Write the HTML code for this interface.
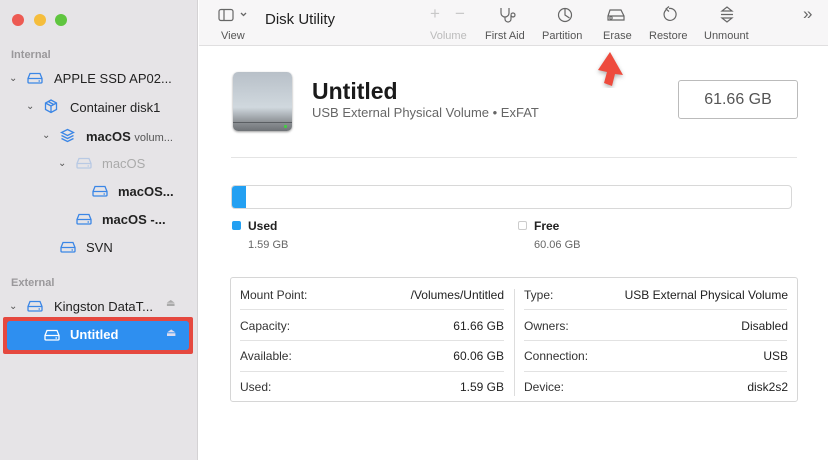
<!DOCTYPE html>
<html><head><style>
*{margin:0;padding:0;box-sizing:border-box}
body{width:828px;height:460px;overflow:hidden;font-family:"Liberation Sans",sans-serif;background:#fff;position:relative}
.a{position:absolute;white-space:nowrap}
#side{left:0;top:0;width:198px;height:460px;background:#e6e4e7;border-right:1px solid #d4d2d4}
.sec{font-size:11px;color:#9a989b;font-weight:bold}
.it{font-size:13px;color:#222}
.chev{font-size:10px;color:#555}
.tb{font-size:11px;color:#555}
.tl{font-size:12px;color:#333}
.tv{font-size:12px;color:#222;text-align:right}
.ln{height:1px;background:#e2e2e2}
</style></head><body>
<div class="a" id="side"></div>
<div class="a" style="left:12px;top:14px;width:12px;height:12px;border-radius:6px;background:#ed5a53"></div>
<div class="a" style="left:34px;top:14px;width:12px;height:12px;border-radius:6px;background:#f5bd3c"></div>
<div class="a" style="left:55px;top:14px;width:12px;height:12px;border-radius:6px;background:#5fc53f"></div>

<svg width="0" height="0" style="position:absolute"><defs>
<symbol id="d" viewBox="0 0 16 12"><path d="M3 1.5h10l2 5v3.5a1 1 0 0 1-1 1H2a1 1 0 0 1-1-1V6.5z M1 6.5h14 M11.5 9h1.5" fill="none" stroke="currentColor" stroke-width="1.3"/></symbol>
</defs></svg>

<div class="a sec" style="left:11px;top:49px">Internal</div>
<div class="a chev" style="left:9px;top:73px">⌄</div>
<svg class="a" style="left:27px;top:72px;color:#3b86e6" width="16" height="12"><use href="#d"/></svg>
<div class="a it" style="left:54px;top:71px">APPLE SSD AP02...</div>
<div class="a chev" style="left:26px;top:101px">⌄</div>
<svg class="a" style="left:44px;top:99px" width="14" height="15" viewBox="0 0 14 15"><path d="M7 1l5.5 3v6.5L7 13.5 1.5 10.5V4z M1.5 4L7 7l5.5-3 M7 7v6.5 M4.2 2.5l5.5 3" fill="none" stroke="#3b86e6" stroke-width="1.3"/></svg>
<div class="a it" style="left:70px;top:100px">Container disk1</div>
<div class="a chev" style="left:42px;top:130px">⌄</div>
<svg class="a" style="left:60px;top:128px" width="15" height="15" viewBox="0 0 15 15"><path d="M7.5 1.5l6 3-6 3-6-3z M1.5 7.5l6 3 6-3 M1.5 10.5l6 3 6-3" fill="none" stroke="#3b86e6" stroke-width="1.3"/></svg>
<div class="a it" style="left:86px;top:129px;font-weight:bold">macOS <span style="font-weight:normal;font-size:11px;color:#555">volum...</span></div>
<div class="a chev" style="left:58px;top:158px">⌄</div>
<svg class="a" style="left:76px;top:157px;color:#b8c9e4" width="16" height="12"><use href="#d"/></svg>
<div class="a it" style="left:102px;top:156px;color:#aaa">macOS</div>
<svg class="a" style="left:92px;top:185px;color:#3b86e6" width="16" height="12"><use href="#d"/></svg>
<div class="a it" style="left:118px;top:184px;font-weight:bold">macOS...</div>
<svg class="a" style="left:76px;top:213px;color:#3b86e6" width="16" height="12"><use href="#d"/></svg>
<div class="a it" style="left:102px;top:212px;font-weight:bold">macOS -...</div>
<svg class="a" style="left:60px;top:241px;color:#3b86e6" width="16" height="12"><use href="#d"/></svg>
<div class="a it" style="left:86px;top:240px">SVN</div>

<div class="a sec" style="left:11px;top:277px">External</div>
<div class="a chev" style="left:9px;top:301px">⌄</div>
<svg class="a" style="left:27px;top:300px;color:#3b86e6" width="16" height="12"><use href="#d"/></svg>
<div class="a it" style="left:54px;top:299px">Kingston DataT...</div>
<div class="a" style="left:166px;top:298px;font-size:10px;color:#aaa">⏏</div>

<div class="a" style="left:3px;top:317px;width:190px;height:37px;background:#e5483f;border-radius:2px"></div>
<div class="a" style="left:7px;top:321px;width:182px;height:29px;background:#2e8ff0;border-radius:3px"></div>
<svg class="a" style="left:44px;top:329px;color:#fff" width="16" height="12"><use href="#d"/></svg>
<div class="a it" style="left:70px;top:327px;color:#fff;font-weight:bold">Untitled</div>
<div class="a" style="left:166px;top:326px;font-size:11px;color:#dde">⏏</div>

<!-- toolbar -->
<div class="a" style="left:199px;top:0;width:629px;height:46px;background:#f7f6f7;border-bottom:1px solid #e0dfe0"></div>
<svg class="a" style="left:218px;top:8px" width="30" height="14" viewBox="0 0 30 14"><rect x="1" y="1.5" width="14" height="11" rx="2" fill="none" stroke="#666" stroke-width="1.2"/><path d="M6 2v10" stroke="#666" stroke-width="1.2"/><path d="M23 5l2.5 2.5L28 5" fill="none" stroke="#666" stroke-width="1.3"/></svg>
<div class="a tb" style="left:221px;top:30px">View</div>
<div class="a" style="left:265px;top:11px;font-size:15px;color:#222">Disk Utility</div>
<div class="a" style="left:430px;top:4px;font-size:17px;color:#c8c8c8">+</div>
<div class="a" style="left:455px;top:4px;font-size:17px;color:#c8c8c8">−</div>
<div class="a tb" style="left:430px;top:30px;color:#bbb">Volume</div>
<svg class="a" style="left:498px;top:6px" width="20" height="18" viewBox="0 0 20 18"><path d="M3 2v5a4 4 0 0 0 8 0V2 M7 11v2a3 3 0 0 0 6 0V9 M13 9a2 2 0 1 0 0-.1" fill="none" stroke="#666" stroke-width="1.2"/></svg>
<div class="a tb" style="left:485px;top:30px">First Aid</div>
<svg class="a" style="left:557px;top:7px" width="16" height="16" viewBox="0 0 16 16"><circle cx="8" cy="8" r="6.5" fill="none" stroke="#666" stroke-width="1.2"/><path d="M8 1.5V8l4.5 3" fill="none" stroke="#666" stroke-width="1.2"/></svg>
<div class="a tb" style="left:542px;top:30px">Partition</div>
<svg class="a" style="left:606px;top:8px" width="20" height="14" viewBox="0 0 20 14"><path d="M4 2h11l3 6v4H2V8z M2 8h16" fill="none" stroke="#666" stroke-width="1.2"/><circle cx="5" cy="10" r="1.2" fill="none" stroke="#666"/></svg>
<div class="a tb" style="left:603px;top:30px">Erase</div>
<svg class="a" style="left:661px;top:6px" width="16" height="17" viewBox="0 0 16 17"><path d="M5 4a6 6 0 1 0 3-1.5 M8 .5 5 3l3 2.5" fill="none" stroke="#666" stroke-width="1.2"/></svg>
<div class="a tb" style="left:649px;top:30px">Restore</div>
<svg class="a" style="left:719px;top:5px" width="16" height="19" viewBox="0 0 16 19"><path d="M3 6l5-4 5 4z M2 9.5h12 M3 13l5 4 5-4z" fill="none" stroke="#666" stroke-width="1.2"/></svg>
<div class="a tb" style="left:704px;top:30px">Unmount</div>
<div class="a" style="left:803px;top:4px;font-size:17px;color:#666">»</div>

<!-- arrow -->
<svg class="a" style="left:590px;top:50px" width="36" height="38" viewBox="0 0 36 38"><path d="M20 2 L33 25 L25 24 L22 36 L14 33 L17 22 L8 20 Z" fill="#ee4b3d" filter="drop-shadow(0 2px 2px rgba(0,0,0,.3))"/></svg>

<!-- main header -->
<div class="a" style="left:233px;top:72px;width:59px;height:59px;border-radius:5px;background:linear-gradient(#b8c0c8,#d0d8de 60%,#8a8e92 86%,#6e7276);box-shadow:0 1px 2px rgba(0,0,0,.4)"></div>
<div class="a" style="left:233px;top:122px;width:59px;height:1px;background:#5a5e62"></div>
<div class="a" style="left:284px;top:125px;width:3px;height:3px;background:#4c4;border-radius:1px"></div>
<div class="a" style="left:312px;top:78px;font-size:23px;font-weight:bold;color:#1a1a1a">Untitled</div>
<div class="a" style="left:312px;top:105px;font-size:13px;color:#666">USB External Physical Volume • ExFAT</div>
<div class="a" style="left:678px;top:80px;width:120px;height:39px;border:1px solid #bbb;border-radius:3px;font-size:16px;color:#555;text-align:center;line-height:37px">61.66 GB</div>
<div class="a" style="left:231px;top:157px;width:566px;height:1px;background:#e4e4e4"></div>

<div class="a" style="left:231px;top:185px;width:561px;height:24px;border:1px solid #d8d8d8;border-radius:4px;background:#fff;overflow:hidden"><div style="width:14px;height:100%;background:#23a0f2"></div></div>
<div class="a" style="left:232px;top:221px;width:9px;height:9px;border-radius:2px;background:#23a0f2"></div>
<div class="a" style="left:248px;top:219px;font-size:12px;font-weight:bold;color:#222">Used</div>
<div class="a" style="left:248px;top:239px;font-size:11px;color:#666">1.59 GB</div>
<div class="a" style="left:518px;top:221px;width:9px;height:9px;border-radius:2px;border:1px solid #ccc"></div>
<div class="a" style="left:534px;top:219px;font-size:12px;font-weight:bold;color:#222">Free</div>
<div class="a" style="left:534px;top:239px;font-size:11px;color:#666">60.06 GB</div>

<div class="a" style="left:230px;top:277px;width:568px;height:125px;border:1px solid #d6d6d6;border-radius:3px"></div>
<div class="a" style="left:514px;top:289px;width:1px;height:107px;background:#ddd"></div>
<div class="a ln" style="left:240px;top:309px;width:264px"></div>
<div class="a ln" style="left:240px;top:340px;width:264px"></div>
<div class="a ln" style="left:240px;top:371px;width:264px"></div>
<div class="a ln" style="left:524px;top:309px;width:263px"></div>
<div class="a ln" style="left:524px;top:340px;width:263px"></div>
<div class="a ln" style="left:524px;top:371px;width:263px"></div>

<div class="a tl" style="left:240px;top:288px">Mount Point:</div><div class="a tv" style="right:324px;top:288px">/Volumes/Untitled</div>
<div class="a tl" style="left:240px;top:319px">Capacity:</div><div class="a tv" style="right:324px;top:319px">61.66 GB</div>
<div class="a tl" style="left:240px;top:349px">Available:</div><div class="a tv" style="right:324px;top:349px">60.06 GB</div>
<div class="a tl" style="left:240px;top:380px">Used:</div><div class="a tv" style="right:324px;top:380px">1.59 GB</div>
<div class="a tl" style="left:524px;top:288px">Type:</div><div class="a tv" style="right:40px;top:288px">USB External Physical Volume</div>
<div class="a tl" style="left:524px;top:319px">Owners:</div><div class="a tv" style="right:40px;top:319px">Disabled</div>
<div class="a tl" style="left:524px;top:349px">Connection:</div><div class="a tv" style="right:40px;top:349px">USB</div>
<div class="a tl" style="left:524px;top:380px">Device:</div><div class="a tv" style="right:40px;top:380px">disk2s2</div>
</body></html>
